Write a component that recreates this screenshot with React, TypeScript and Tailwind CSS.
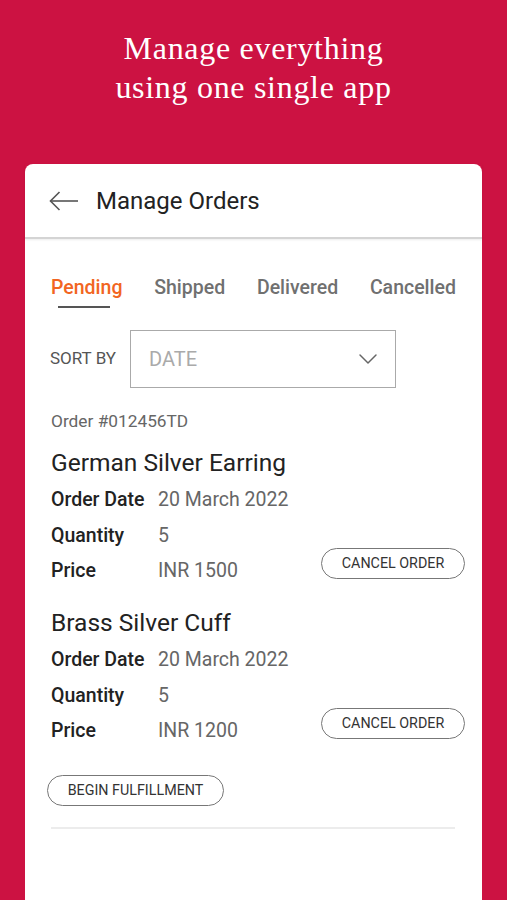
import { ChevronDown } from "lucide-react";

const TABS = ["Pending", "Shipped", "Delivered", "Cancelled"];

type Order = { name: string; date: string; qty: string; price: string };

const ORDERS: Order[] = [
  { name: "German Silver Earring", date: "20 March 2022", qty: "5", price: "INR 1500" },
  { name: "Brass Silver Cuff", date: "20 March 2022", qty: "5", price: "INR 1200" },
];

function OrderBlock({ order }: { order: Order }) {
  return (
    <div>
      <h3 className="text-[24.5px] leading-[30px] text-[#222]">{order.name}</h3>
      <div className="mt-[10px] flex items-end justify-between">
        <div className="flex flex-col gap-[11.5px] text-[19.5px] leading-[24px]">
          <div className="flex">
            <span className="w-[107px] font-medium text-[#222]">Order Date</span>
            <span className="text-[#666]">{order.date}</span>
          </div>
          <div className="flex">
            <span className="w-[107px] font-medium text-[#222]">Quantity</span>
            <span className="text-[#666]">{order.qty}</span>
          </div>
          <div className="flex">
            <span className="w-[107px] font-medium text-[#222]">Price</span>
            <span className="text-[#666]">{order.price}</span>
          </div>
        </div>
        <button
          type="button"
          className="mb-[4px] mr-[-9px] h-[31px] w-[144px] rounded-full border border-[#777] text-[14.3px] text-[#333]"
        >
          CANCEL ORDER
        </button>
      </div>
    </div>
  );
}

export default function App() {
  return (
    <div className="flex h-[900px] flex-col overflow-hidden bg-[#cc1242] font-['Roboto',sans-serif]">
      <div className="pt-[29px] text-center font-['Liberation_Serif',serif] text-[32px] leading-[39px] tracking-[0.7px] text-white">
        <p>Manage everything</p>
        <p>using one single app</p>
      </div>

      <div className="mx-[25px] mt-[57px] flex-1 rounded-t-[8px] bg-white">
        <header className="flex h-[75px] items-center border-b-2 border-[#d4d4d4] pl-[24px] shadow-[0_1px_2px_rgba(0,0,0,0.08)]">
          <svg width="30" height="20" viewBox="0 0 30 20" fill="none" stroke="#555" strokeWidth="1.6">
            <path d="M29 10H1.5" />
            <path d="M10.5 1L1.5 10l9 9" />
          </svg>
          <h1 className="ml-[17px] text-[24px] text-[#222]">Manage Orders</h1>
        </header>

        <nav className="flex justify-between px-[26px] pt-[37px]">
          {TABS.map((t, i) => (
            <div key={t} className="flex flex-col items-center">
              <span
                className={`text-[19.5px] font-medium leading-[24px] ${
                  i === 0 ? "text-[#f26522]" : "text-[#707070]"
                }`}
              >
                {t}
              </span>
              <span
                className={`mt-[6px] mr-[6px] h-[2px] w-[52px] ${i === 0 ? "bg-[#555]" : "bg-transparent"}`}
              />
            </div>
          ))}
        </nav>

        <div className="mt-[22px] flex items-center pl-[25px]">
          <span className="w-[80px] text-[17px] text-[#555]">SORT BY</span>
          <div className="flex h-[58px] w-[266px] items-center justify-between border border-[#aaa] pl-[18px] pr-[11px]">
            <span className="text-[20px] text-[#aaa]">DATE</span>
            <ChevronDown className="h-[32px] w-[32px] text-[#666]" strokeWidth={1.1} />
          </div>
        </div>

        <div className="px-[26px] pt-[23px]">
          <p className="text-[17.3px] leading-[20px] text-[#666]">Order #012456TD</p>
          <div className="mt-[17px] flex flex-col gap-[25px]">
            {ORDERS.map((o) => (
              <OrderBlock key={o.name} order={o} />
            ))}
          </div>
          <button
            type="button"
            className="-ml-[4px] mt-[32px] h-[31px] w-[177px] rounded-full border border-[#777] text-[14.3px] text-[#333]"
          >
            BEGIN FULFILLMENT
          </button>
          <div className="mr-[1px] mt-[21px] h-[2px] bg-[#ececec]" />
        </div>
      </div>
    </div>
  );
}
